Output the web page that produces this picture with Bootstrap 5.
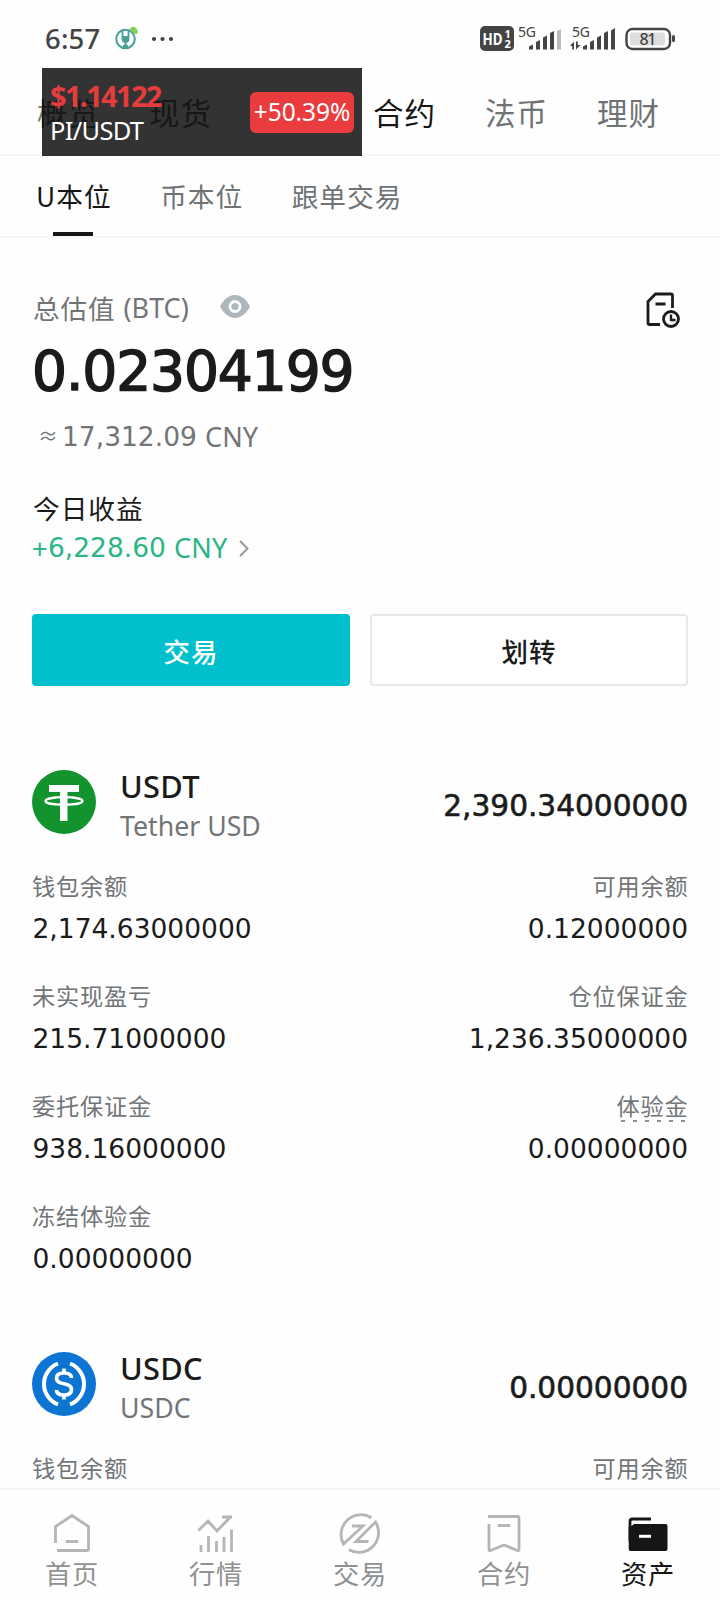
<!DOCTYPE html>
<html lang="zh-CN">
<head>
<meta charset="utf-8">
<meta name="viewport" content="width=device-width, initial-scale=1">
<title>资产</title>
<link rel="stylesheet" href="https://cdn.jsdelivr.net/npm/bootstrap@5.3.0/dist/css/bootstrap.min.css">
<style>
  body { font-family: "Noto Sans", "Noto Sans CJK SC", sans-serif; color: #1b1b1b; background: #fefefe; height: 1600px; overflow: hidden; white-space: nowrap; line-height: 1; }
  svg { display: block; flex: none; }
  .zh { font-family: "Noto Sans CJK SC", sans-serif; }
  .dim { color: #727577; }
  .statusbar { height: 68px; padding: 10px 44px 0 45px; color: #444; }
  .clock { font-size: 27.5px; font-weight: 500; letter-spacing: .2px; }
  .maintabs { height: 88px; padding: 2px 0 0 37px; border-bottom: 2px solid #f4f5f5; }
  .maintabs a { font-size: 30.5px; letter-spacing: 1px; width: 112px; color: #6e7375; text-decoration: none; }
  .maintabs a.on, .subtabs a.on { color: #161616; }
  .maintabs .past-float { margin-left: 112px; }
  .subtabs { height: 82px; padding-left: 36px; border-bottom: 2px solid #f4f5f5; gap: 48.5px; }
  .subtabs a { font-size: 26.7px; letter-spacing: 1px; color: #6e7375; text-decoration: none; position: relative; height: 80px; padding-top: 1px; }
  .subtabs a.on::after { content: ""; position: absolute; left: 17px; bottom: 0; width: 40px; height: 4px; background: #161616; }
  .ticker { position: absolute; left: 42px; top: 68px; width: 320px; height: 88px; padding: 0 8px; background: rgba(0,0,0,.8); color: #fff; }
  .ticker-price { font-size: 29px; font-weight: 700; color: #e53c3e; height: 36px; line-height: 37px; letter-spacing: -1.7px; }
  .ticker-pair { font-size: 25.5px; height: 34px; line-height: 35px; letter-spacing: -.7px; }
  .ticker-pct { width: 104px; height: 41px; border-radius: 6px; background: #ea3b3e; font-size: 24.5px; letter-spacing: -.1px; padding-top: 1px; }
  .line { display: flex; align-items: center; }
  .n { font-family: "DejaVu Sans", sans-serif; font-size: 26.5px; }
  .lt { font-size: 27px; }
  .approx { font-size: 20px; width: 15px; margin: -1px 0 0 -2px; }
  .cny { margin: -2px 0 0 8px; letter-spacing: .2px; }
  .big { font-family: "DejaVu Sans", sans-serif; font-size: 55px; letter-spacing: -1.1px; -webkit-text-stroke: 1.5px #1b1b1b; height: 64px; }
  .act { flex: 1 1 0; height: 72px; border-radius: 4px; font-size: 26.5px; font-weight: 500; letter-spacing: 1px; padding-top: 7px; }
  .act-go, .act-go:hover { background: #00c0ce; color: #fff; border: 2px solid #00c0ce; }
  .act-move { border: 2px solid #e8e8e8; color: #1b1b1b; background: #fff; }
  .coin-name { font-size: 30.8px; font-weight: 500; height: 40px; line-height: 39px; letter-spacing: .3px; }
  .coin-full { font-size: 26.700px; height: 38px; line-height: 38px; }
  .coin-sum { font-family: "DejaVu Sans", sans-serif; font-size: 29.6px; -webkit-text-stroke: .6px #1b1b1b; padding-top: 2px; }
  .coin-head { height: 80px; }
  .fields { row-gap: 30px; margin-top: 20px; }
  .field { height: 80px; }
  .field .k { font-size: 23.2px; letter-spacing: .8px; height: 38px; line-height: 38px; color: #727577; }
  .field .n { height: 42px; line-height: 50px; padding-left: .5px; }
  .text-end .k { margin-right: -.5px; }
  .dashes { position: relative; }
  .dashes::after { content: ""; position: absolute; left: 4px; right: 1px; top: 34px; height: 2px; background: repeating-linear-gradient(90deg, #8d8f91 0 4px, transparent 4px 12px); }
  .tabbar { height: 112px; background: #fefefe; border-top: 2px solid #f4f5f5; }
  .tabbar a { font-size: 26.3px; letter-spacing: .8px; color: #8f9192; text-decoration: none; }
  .tabbar a.on { color: #161616; }
  .tabbar svg { margin-top: 18px; }
  .tabbar span { height: 40px; line-height: 40px; margin-top: -1px; }
</style>
</head>
<body class="d-flex flex-column position-relative">
<header class="statusbar line justify-content-between flex-shrink-0">
  <div class="line">
    <span class="clock">6:57</span>
    <svg width="24" height="26" viewBox="0 0 24 26" style="margin-left:15px;margin-top:-2px" fill="none"><circle cx="10.500" cy="14" r="9.300" stroke="#45a096" stroke-width="2"/><path d="M7.500 4.500v10M13.500 4.500v10" stroke="#45a096" stroke-width="1.800"/><path d="M7 11h7v4.500q0 2-3.500 2T7 15.500z" fill="#45a096"/><path d="M10.500 17v6.500M8 21h5" stroke="#45a096" stroke-width="2"/><path d="M15 4q2-4 6-1 3 3 1 6-5 0-7-5z" fill="#84cf59"/></svg>
    <svg width="24" height="6" style="margin-left:12px" fill="#444"><circle cx="3" cy="3" r="2.100"/><circle cx="11.500" cy="3" r="2.100"/><circle cx="20" cy="3" r="2.100"/></svg>
  </div>
  <svg width="196" height="32" viewBox="0 -2 196 32" fill="#444" font-family="Noto Sans" style="margin-top:-2px;overflow:visible">
    <rect x="0" y="2" width="34" height="25" rx="5"/>
    <text x="2.500" y="20.500" font-size="15.500" font-weight="700" fill="#fff" textLength="20" lengthAdjust="spacingAndGlyphs">HD</text>
    <text x="24.500" y="13.500" font-size="11" font-weight="700" fill="#fff">1</text>
    <text x="24.500" y="24" font-size="11" font-weight="700" fill="#fff">2</text>
    <text x="38" y="13" font-size="14" textLength="18">5G</text>
    <path d="M49 25.500v-3l4-2v5zM56 25.500v-7.500l4-2v9.500zM63 25.500v-12l4-2v14zM70 25.500V9l4-2v18.500z"/>
    <path d="M77 25.500V7l4-2v20.500z" fill="#bbb"/>
    <text x="92" y="13" font-size="14" textLength="18">5G</text>
    <path d="M90 22l4-4.500v8h-1.800V22zM96 17.500h1.800V21h2.700L96 25.500z"/>
    <path d="M103 25.500v-3l4-2v5zM110 25.500v-7.500l4-2v9.500zM117 25.500v-12l4-2v14zM124 25.500V9l4-2v18.500zM131 25.500V6.500l4-2.500v21.500z"/>
    <rect x="146.500" y="5" width="43.500" height="20" rx="6" fill="#fff" stroke="#444" stroke-width="2.400"/>
    <rect x="150" y="8.500" width="35" height="13" rx="2" fill="#ddd"/>
    <rect x="192" y="11" width="3" height="7" rx="1.500"/>
    <text x="159.500" y="21" font-size="16" font-weight="500" textLength="17">81</text>
  </svg>
</header>

<nav class="maintabs zh line flex-shrink-0">
  <a href="#">概览</a><a href="#">现货</a><a href="#" class="on past-float">合约</a><a href="#">法币</a><a href="#">理财</a>
</nav>
<nav class="subtabs zh line flex-shrink-0">
  <a href="#" class="on line">U本位</a><a href="#" class="line">币本位</a><a href="#" class="line">跟单交易</a>
</nav>

<aside class="ticker d-flex align-items-center justify-content-between">
  <div><div class="ticker-price">$1.14122</div><div class="ticker-pair">PI/USDT</div></div>
  <div class="ticker-pct d-flex align-items-center justify-content-center">+50.39%</div>
</aside>

<main class="flex-grow-1 overflow-hidden" style="padding:0 32px">
  <section>
    <div class="line justify-content-between" style="margin-top:50px;height:40px">
      <div class="line dim">
        <span class="zh" style="font-size:26.500px;letter-spacing:1px;padding-left:1px">总估值</span><span class="lt" style="margin:-2px 0 0 8px">(BTC)</span>
        <svg width="30" height="23" viewBox="0 0 30 23" style="margin-left:31px;margin-top:-4px"><path d="M0 11.500C4 4 9 0 15 0s11 4 15 11.500C26 19 21 23 15 23S4 19 0 11.500z" fill="#adb7bc"/><circle cx="15" cy="11.500" r="5" fill="#adb7bc" stroke="#fff" stroke-width="2.800"/></svg>
      </div>
      <svg width="36" height="38" viewBox="0 0 36 38" style="margin:3px 6px 0 0" fill="none" stroke="#1b1b1b" stroke-width="2.800"><path d="M14 33.500H3.500q-1.500 0-1.500-1.500V10.500L9.500 3H25q1.500 0 1.500 1.500V17M9.500 13h10"/><circle cx="25" cy="28" r="7.500"/><path d="M25 23.500V29h4.500" stroke-width="2.400"/></svg>
    </div>
    <div class="big line" style="margin-top:11px">0.02304199</div>
    <div class="line dim" style="height:40px;margin-top:14px;padding-left:8px"><span class="approx">≈</span><span class="n" style="margin-left:9px">17,312.09</span><span class="lt cny">CNY</span></div>
    <div class="line zh" style="height:40px;margin-top:31px;font-size:26.700px;letter-spacing:1px;padding-left:1px">今日收益</div>
    <div class="line" style="height:40px;color:#2bb585"><span class="lt">+</span><span class="n" style="margin-left:.500px">6,228.60</span><span class="lt cny">CNY</span>
      <svg width="10" height="17" viewBox="0 0 10 17" style="margin-left:12px" fill="none" stroke="#999" stroke-width="2"><path d="M1 1l7.500 7.500L1 16"/></svg>
    </div>
    <div class="d-flex zh" style="gap:20px;margin-top:46px">
      <button class="btn act act-go">交易</button><button class="btn act act-move">划转</button>
    </div>
  </section>

  <section style="margin-top:80px">
    <div class="coin-head line">
      <svg width="64" height="64" viewBox="0 0 64 64" style="margin-top:-8px"><circle cx="32" cy="32" r="32" fill="#12932d"/><path d="M17 15h30v7H35.500v29h-7.500V22H17z" fill="#fff"/><ellipse cx="32" cy="31" rx="18.500" ry="3.800" fill="none" stroke="#fff" stroke-width="2.200"/></svg>
      <div style="margin-left:24px"><div class="coin-name">USDT</div><div class="coin-full dim">Tether USD</div></div>
      <div class="coin-sum ms-auto">2,390.34000000</div>
    </div>
    <div class="row gx-0 fields">
      <div class="col-6 field"><div class="k zh">钱包余额</div><div class="n">2,174.63000000</div></div>
      <div class="col-6 field text-end"><div class="k zh">可用余额</div><div class="n">0.12000000</div></div>
      <div class="col-6 field"><div class="k zh">未实现盈亏</div><div class="n">215.71000000</div></div>
      <div class="col-6 field text-end"><div class="k zh">仓位保证金</div><div class="n">1,236.35000000</div></div>
      <div class="col-6 field"><div class="k zh">委托保证金</div><div class="n">938.16000000</div></div>
      <div class="col-6 field text-end"><div class="k zh"><span class="dashes d-inline-block">体验金</span></div><div class="n">0.00000000</div></div>
      <div class="col-6 field"><div class="k zh">冻结体验金</div><div class="n">0.00000000</div></div>
    </div>
  </section>

  <section style="margin-top:72px">
    <div class="coin-head line">
      <svg width="64" height="64" viewBox="0 0 64 64" style="margin-top:-8px" fill="none" stroke="#fff"><circle cx="32" cy="32" r="32" fill="#0b75d1" stroke="none"/><path d="M26 11.500a22 22 0 0 0 0 41M38 11.500a22 22 0 0 1 0 41" stroke-width="4"/><path d="M39.500 26q0-5-7.500-5t-7.500 5.200q0 4.300 7.500 5.600t7.500 5.700q0 5.500-7.500 5.500t-7.500-5M32 16.500V21M32 43v4.500" stroke-width="3.700"/></svg>
      <div style="margin-left:24px"><div class="coin-name">USDC</div><div class="coin-full dim">USDC</div></div>
      <div class="coin-sum ms-auto">0.00000000</div>
    </div>
    <div class="row gx-0 fields">
      <div class="col-6 field"><div class="k zh">钱包余额</div></div>
      <div class="col-6 field text-end"><div class="k zh">可用余额</div></div>
    </div>
  </section>
</main>

<nav class="tabbar zh d-flex flex-shrink-0">
  <a href="#" class="col d-flex flex-column align-items-center"><svg width="44" height="46" viewBox="0 0 44 46" fill="none" stroke="#b4b6b6" stroke-width="2.800"><path d="M5.500 35V18.500L22 7.500l16.500 11V41q0 1.500-1.500 1.500H7M16 33.500h12"/></svg><span>首页</span></a>
  <a href="#" class="col d-flex flex-column align-items-center"><svg width="44" height="46" viewBox="0 0 44 46" fill="none" stroke="#b4b6b6" stroke-width="2.800"><path d="M4.500 22.500L14 13l9 10L36 9.500M28 9h10M7 44v-7M14.500 44V28M22.500 44V33M30 44V29M37.500 44V21.500"/></svg><span>行情</span></a>
  <a href="#" class="col d-flex flex-column align-items-center"><svg width="44" height="46" viewBox="0 0 44 46" fill="none" stroke="#b4b6b6" stroke-width="2.800"><path d="M33.500 9.800A19.800 19.800 0 0 0 5.500 36L25 18H14M11 41.800A19.800 19.800 0 0 0 37.500 14L18 33.500H30.500"/></svg><span>交易</span></a>
  <a href="#" class="col d-flex flex-column align-items-center"><svg width="44" height="46" viewBox="0 0 44 46" fill="none" stroke="#b4b6b6" stroke-width="2.800"><path d="M6 8.500h29.500q1.500 0 1.500 1.500v31.500q0 1.500-1.500 1L22 37 8.500 42.500q-1.500.5-1.500-1V16M16 17.500h12"/></svg><span>合约</span></a>
  <a href="#" class="col d-flex flex-column align-items-center on"><svg width="44" height="46" viewBox="0 0 44 46"><path d="M4 33V13.500Q4 11 6.500 11H25" fill="none" stroke="#161616" stroke-width="2.800"/><path d="M4 19l4-3H39.500q2 0 2 2v23q0 2-2 2H4.700q-2 0-2-2V19z" fill="#161616"/><path d="M13 28.300h12" stroke="#fff" stroke-width="3"/></svg><span>资产</span></a>
</nav>
<script src="https://cdn.jsdelivr.net/npm/bootstrap@5.3.0/dist/js/bootstrap.bundle.min.js"></script>
</body>
</html>
